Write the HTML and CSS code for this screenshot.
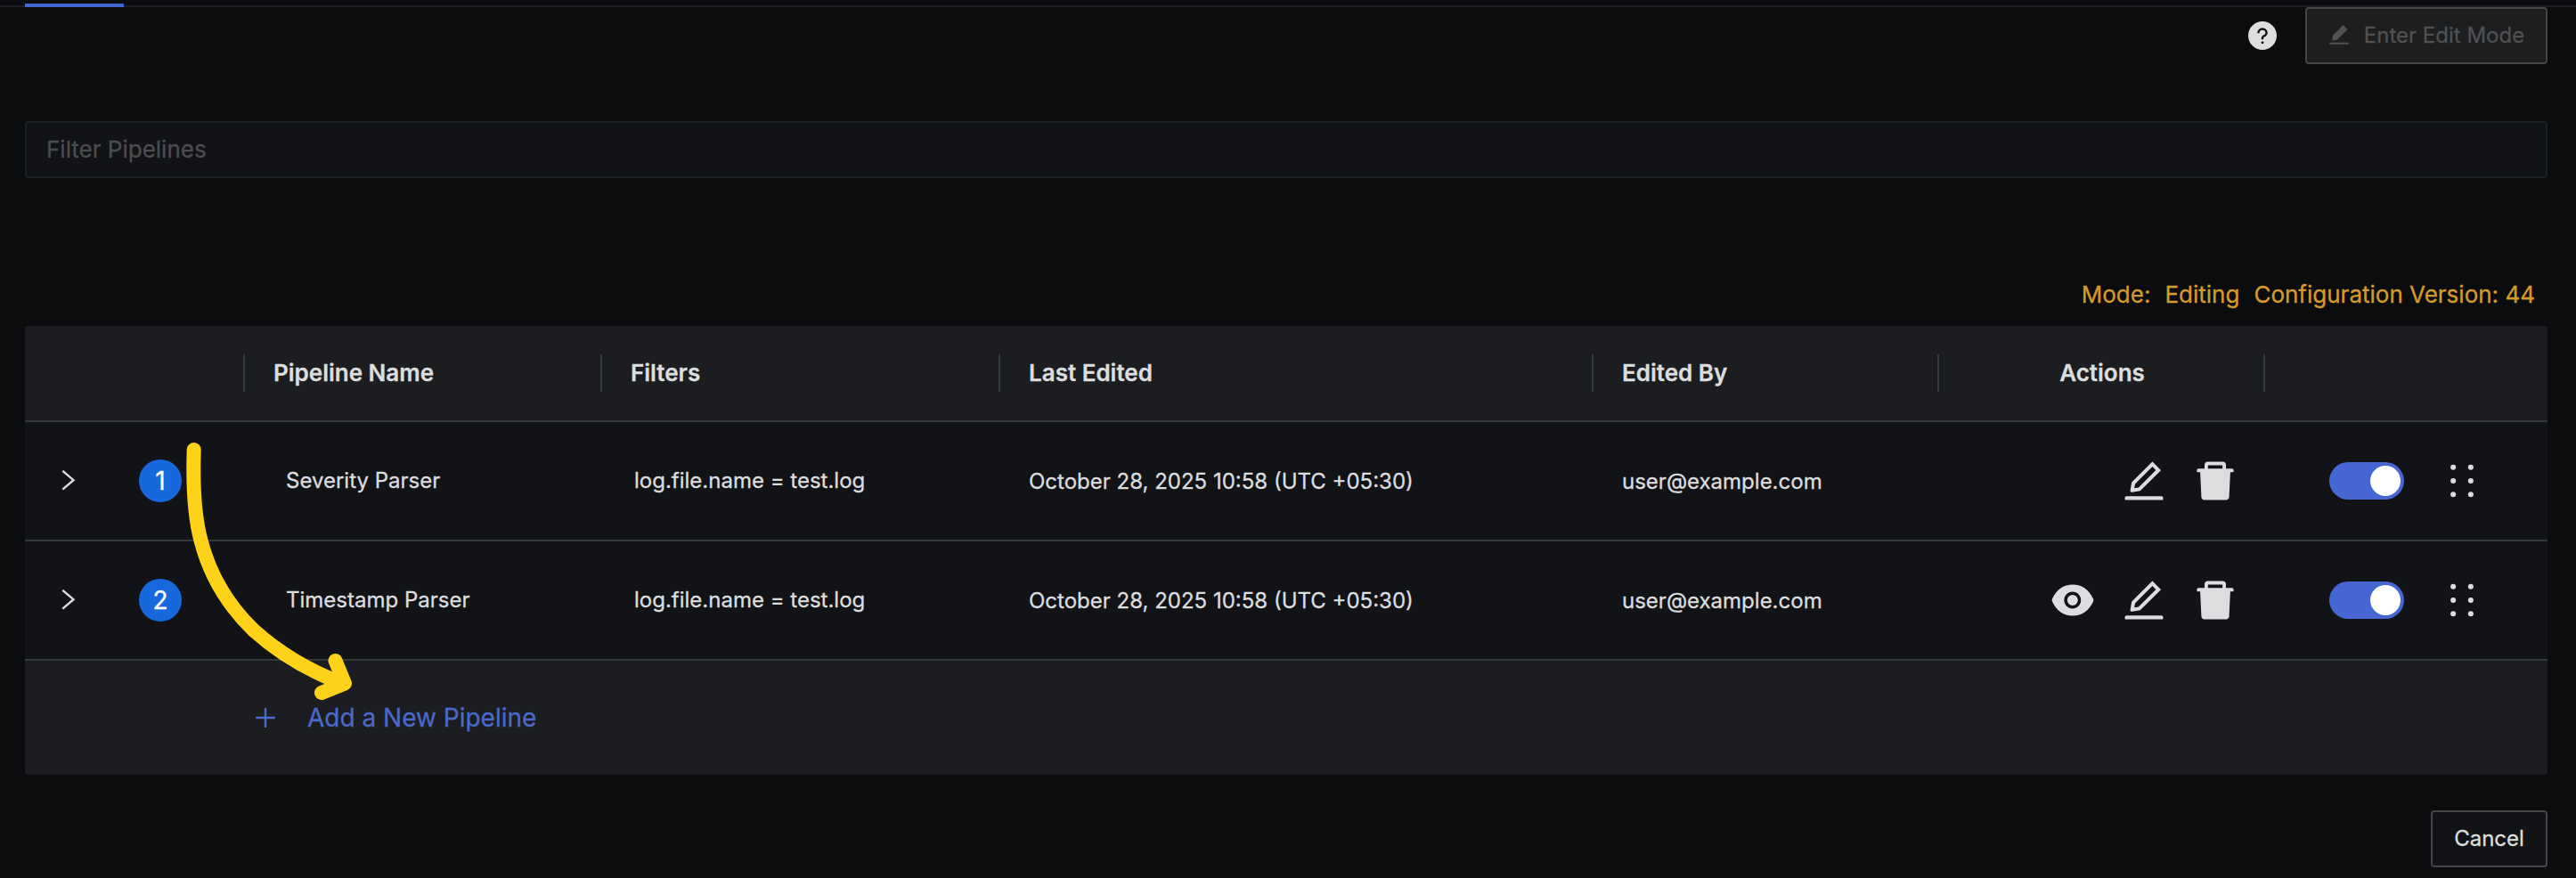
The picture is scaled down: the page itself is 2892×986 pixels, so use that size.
FILE: index.html
```
<!DOCTYPE html>
<html lang="en">
<head>
  <meta charset="UTF-8">
  <meta name="viewport" content="width=device-width, initial-scale=1.0">
  <title>Pipelines</title>
  <link rel="stylesheet" href="styles.css">
</head>
<body>
  <svg class="icon-defs" aria-hidden="true">
    <symbol id="icon-edit" viewBox="64 64 896 896">
      <path d="M257.7 752c2 0 4-.2 6-.5L431.9 722c2-.4 3.9-1.3 5.3-2.8l423.9-423.9a9.96 9.96 0 000-14.1L694.9 114.9c-1.9-1.9-4.4-2.9-7.1-2.9s-5.2 1-7.1 2.9L256.8 538.8c-1.5 1.5-2.4 3.3-2.8 5.3l-29.5 168.2a33.5 33.5 0 009.4 29.8c6.6 6.4 14.9 9.9 23.8 9.9zm67.4-174.4L687.8 215l73.3 73.3-362.7 362.6-88.9 15.7 15.6-89zM880 836H144c-17.7 0-32 14.3-32 32v36c0 4.4 3.6 8 8 8h784c4.4 0 8-3.6 8-8v-36c0-17.7-14.3-32-32-32z"/>
    </symbol>
    <symbol id="icon-edit-filled" viewBox="64 64 896 896">
      <path d="M880 836H144c-17.7 0-32 14.3-32 32v36c0 4.4 3.6 8 8 8h784c4.4 0 8-3.6 8-8v-36c0-17.7-14.3-32-32-32zm-622.3-84c2 0 4-.2 6-.5L431.9 722c2-.4 3.9-1.3 5.3-2.8l423.9-423.9c3.9-3.9 3.9-10.2 0-14.1L694.9 114.9c-1.9-1.9-4.4-2.9-7.1-2.9s-5.2 1-7.1 2.9L256.8 538.8c-1.5 1.5-2.4 3.3-2.8 5.3l-29.5 168.2c-1.9 11.1 1.5 21.9 9.4 29.8 6.6 6.4 14.9 9.9 23.8 9.9z"/>
    </symbol>
    <symbol id="icon-delete" viewBox="64 64 896 896">
      <path d="M864 256H736v-80c0-35.3-28.7-64-64-64H352c-35.3 0-64 28.7-64 64v80H160c-17.7 0-32 14.3-32 32v32c0 4.4 3.6 8 8 8h60.4l24.7 523c1.6 34.1 29.8 61 63.9 61h454c34.2 0 62.3-26.8 63.9-61l24.7-523H888c4.4 0 8-3.6 8-8v-32c0-17.7-14.3-32-32-32zm-200 0H360v-72h304v72z"/>
    </symbol>
    <symbol id="icon-eye" viewBox="64 64 896 896">
      <path d="M396 512a112 112 0 10224 0 112 112 0 10-224 0zm546.2-25.8C847.4 286.5 704.1 186 512 186c-192.2 0-335.4 100.5-430.2 300.3a60.3 60.3 0 000 51.5C176.6 737.5 319.9 838 512 838c192.2 0 335.4-100.5 430.2-300.3 7.7-16.2 7.7-35 0-51.5zM508 688c-97.2 0-176-78.8-176-176s78.8-176 176-176 176 78.8 176 176-78.8 176-176 176z"/>
    </symbol>
    <symbol id="icon-question" viewBox="64 64 896 896">
      <path d="M512 64C264.6 64 64 264.6 64 512s200.6 448 448 448 448-200.6 448-448S759.4 64 512 64zm0 708c-22.1 0-40-17.9-40-40s17.9-40 40-40 40 17.9 40 40-17.9 40-40 40zm62.9-219.5a48.3 48.3 0 00-30.9 44.8V620c0 4.4-3.6 8-8 8h-48c-4.4 0-8-3.6-8-8v-21.5c0-23.1 6.7-45.9 19.9-64.9 12.9-18.6 30.9-32.8 52.1-40.9 34-13.1 56-41.6 56-72.7 0-44.1-43.1-80-96-80s-96 35.9-96 80v7.6c0 4.4-3.6 8-8 8h-48c-4.4 0-8-3.6-8-8V420c0-39.3 17.2-76 48.4-103.3C430.4 290.4 470 276 512 276s81.6 14.5 111.6 40.7C654.8 344 672 380.7 672 420c0 57.8-38.1 109.8-97.1 132.5z"/>
    </symbol>
    <symbol id="icon-holder" viewBox="64 64 896 896">
      <circle cx="328" cy="228" r="56"/><circle cx="696" cy="228" r="56"/>
      <circle cx="328" cy="512" r="56"/><circle cx="696" cy="512" r="56"/>
      <circle cx="328" cy="796" r="56"/><circle cx="696" cy="796" r="56"/>
    </symbol>
    <symbol id="icon-right" viewBox="0 0 24 24">
      <path d="M5.3 0.800L17.500 11.200 5.3 21.600" fill="none" stroke="currentColor" stroke-width="2.4"/>
    </symbol>
    <symbol id="icon-plus" viewBox="0 0 24 24">
      <path d="M12 1v22M1.2 12h21.6" fill="none" stroke="currentColor" stroke-width="2.4"/>
    </symbol>
  </svg>

  <div class="tabs-nav"><div class="tabs-ink"></div></div>

  <main class="content">
    <div class="toolbar">
      <svg class="help"><use href="#icon-question"/></svg>
      <button class="btn btn-edit" disabled>
        <svg><use href="#icon-edit-filled"/></svg>
        <span>Enter Edit Mode</span>
      </button>
    </div>

    <input class="search" type="text" placeholder="Filter Pipelines">

    <div class="mode">
      <span>Mode:</span>
      <span>Editing</span>
      <span>Configuration Version: 44</span>
    </div>

    <div class="table">
      <div class="row head">
        <div class="cell"></div>
        <div class="cell">Pipeline Name</div>
        <div class="cell">Filters</div>
        <div class="cell">Last Edited</div>
        <div class="cell">Edited By</div>
        <div class="cell center">Actions</div>
        <div class="cell"></div>
      </div>

      <div class="row">
        <div class="cell order">
          <svg class="expand"><use href="#icon-right"/></svg>
          <span class="badge">1</span>
        </div>
        <div class="cell name">Severity Parser</div>
        <div class="cell filter">log.file.name = test.log</div>
        <div class="cell">October 28, 2025 10:58 (UTC +05:30)</div>
        <div class="cell">user@example.com</div>
        <div class="cell actions">
          <svg><use href="#icon-edit"/></svg>
          <svg><use href="#icon-delete"/></svg>
        </div>
        <div class="cell controls">
          <span class="switch"></span>
          <svg><use href="#icon-holder"/></svg>
        </div>
      </div>

      <div class="row">
        <div class="cell order">
          <svg class="expand"><use href="#icon-right"/></svg>
          <span class="badge">2</span>
        </div>
        <div class="cell name">Timestamp Parser</div>
        <div class="cell filter">log.file.name = test.log</div>
        <div class="cell">October 28, 2025 10:58 (UTC +05:30)</div>
        <div class="cell">user@example.com</div>
        <div class="cell actions">
          <svg><use href="#icon-eye"/></svg>
          <svg><use href="#icon-edit"/></svg>
          <svg><use href="#icon-delete"/></svg>
        </div>
        <div class="cell controls">
          <span class="switch"></span>
          <svg><use href="#icon-holder"/></svg>
        </div>
      </div>

      <div class="table-footer">
        <svg><use href="#icon-plus"/></svg>
        <span>Add a New Pipeline</span>
      </div>

      <!-- arrow pointing at the add button -->
      <svg class="arrow" viewBox="0 0 200 300">
        <path d="M19.7 19C18.500 54 19 89 27.500 121C38 162 58 194 87 222C117 249 148 267 186 281.500"/>
        <path d="M178.500 256L189 281.500L163 292"/>
      </svg>
    </div>

    <div class="footer">
      <button class="btn">Cancel</button>
    </div>
  </main>
</body>
</html>
```
FILE: styles.css
```
* {
  box-sizing: border-box;
}
body {
  margin: 0;
  height: 986px;
  overflow: hidden;
  background-color: #0b0c0e;
  color: #dcdddf;
  font-family: Inter, sans-serif;
  font-size: 24px;
  -webkit-text-stroke: 0.3px currentColor;
}
svg {
  fill: currentColor;
  flex-shrink: 0;
}
.icon-defs {
  display: none;
}
.tabs-nav {
  height: 8px;
  padding: 4px 28px 0;
  background: linear-gradient(#1d1f23, #1d1f23) bottom / 100% 2px no-repeat;
}
.tabs-ink {
  width: 111px;
  height: 4px;
  background-color: #4568d0;
}
.content {
  padding: 0 32px 0 28px;
}
.toolbar {
  display: flex;
  justify-content: flex-end;
  align-items: center;
  gap: 32px;
}
.help {
  width: 32px;
  height: 32px;
}
.btn {
  display: flex;
  align-items: center;
  justify-content: center;
  width: 131px;
  height: 64px;
  padding: 0 0 2px;
  border: 2px solid #434547;
  border-radius: 4px;
  background-color: #121317;
  color: #dcdddf;
  font-family: inherit;
  font-size: 24px;
}
.btn-edit {
  gap: 16px;
  width: 272px;
  background-color: #1d1e1f;
  color: #505153;
}
.btn-edit svg {
  width: 24px;
  height: 24px;
}
.search {
  display: block;
  width: 100%;
  height: 64px;
  margin-top: 64px;
  padding: 0 22px 2px;
  border: 2px solid #1d2023;
  border-radius: 4px;
  background-color: #121317;
  color: #dcdddf;
  font-family: inherit;
  font-size: 26px;
}
.search::placeholder {
  color: #4c4d50;
  opacity: 1;
}
.mode {
  display: flex;
  justify-content: flex-end;
  gap: 16px;
  margin-top: 109px;
  padding: 0 14px;
  color: #d49b2c;
  font-size: 26px;
  line-height: 44px;
}
.table {
  position: relative;
  margin-top: 13px;
  border-radius: 4px;
  background-color: #121317;
}
.row {
  display: grid;
  grid-template-columns: 247px 401px 447px 666px 388px 366px 317px;
  height: 134px;
  border-bottom: 2px solid #36393c;
}
.cell {
  display: flex;
  align-items: center;
  padding: 0 32px;
  white-space: nowrap;
}
.head {
  height: 108px;
  border-radius: 4px 4px 0 0;
  background-color: #1b1d20;
  font-size: 26px;
  font-weight: 600;
}
.head .cell {
  padding-bottom: 2px;
}
/* short divider at the right edge of each header cell */
.head .cell:not(:last-child) {
  background: linear-gradient(#36393c, #36393c) right center / 2px 42px no-repeat;
}
.center {
  justify-content: center;
}
.order {
  gap: 67px;
  padding-left: 37px;
}
.expand {
  width: 24px;
  height: 24px;
}
.badge {
  display: flex;
  align-items: center;
  justify-content: center;
  width: 48px;
  height: 48px;
  border-radius: 50%;
  background-color: #1768dc;
  color: #fff;
  font-size: 28px;
}
.name {
  padding: 0 0 2px 46px;
}
.filter {
  padding: 0 0 2px 36px;
}
.actions {
  justify-content: flex-end;
  gap: 32px;
}
.actions svg,
.controls svg {
  width: 48px;
  height: 48px;
}
.controls {
  justify-content: space-evenly;
}
.switch {
  display: flex;
  justify-content: flex-end;
  width: 84px;
  height: 42px;
  padding: 4px;
  border-radius: 21px;
  background-color: #4566d3;
}
.switch::before {
  content: "";
  width: 34px;
  height: 34px;
  border-radius: 50%;
  background-color: #fff;
}
.table-footer {
  display: flex;
  align-items: center;
  gap: 35px;
  height: 128px;
  padding-left: 258px;
  border-radius: 0 0 4px 4px;
  background-color: #1b1d20;
  color: #4b69cb;
  font-size: 28px;
}
.table-footer svg {
  width: 24px;
  height: 24px;
}
.arrow {
  position: absolute;
  left: 170px;
  top: 120px;
  width: 200px;
  height: 300px;
  fill: none;
  stroke: #fdd218;
  stroke-width: 16;
  stroke-linecap: round;
  stroke-linejoin: round;
}
.footer {
  display: flex;
  justify-content: flex-end;
  margin-top: 40px;
}
```
